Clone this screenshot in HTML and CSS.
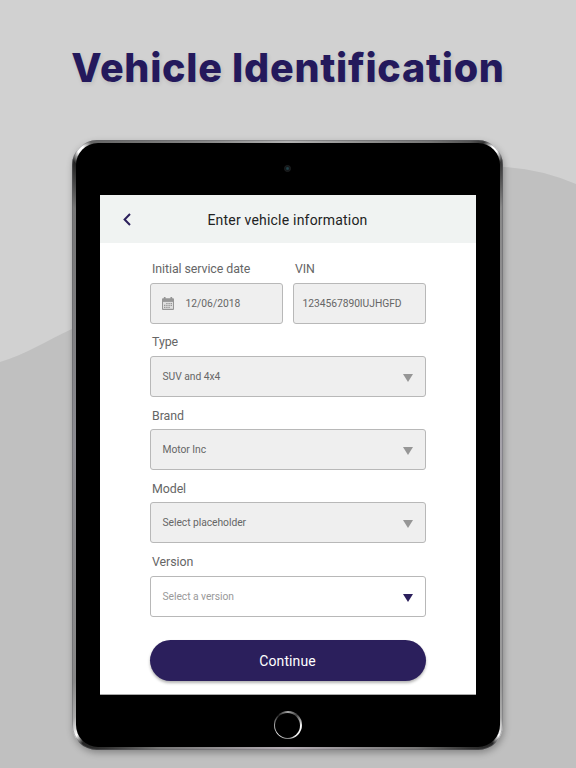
FILE: index.html
```html
<!DOCTYPE html>
<html lang="en">
<head>
  <meta charset="UTF-8">
  <meta name="viewport" content="width=device-width, initial-scale=1.0">
  <title>Vehicle Identification</title>
  <link rel="stylesheet" href="styles.css">
</head>
<body>

  <!-- Background wave -->
  <svg class="wave" viewBox="0 0 576 768" aria-hidden="true">
    <path d="M0 362C24 355 48 340 72 329C210 268 340 160 505 167Q541 169 576 184V768H0Z" fill="#c0c0c0"/>
  </svg>

  <h1 class="title">Vehicle Identification</h1>

  <!-- Tablet -->
  <div class="tablet">
    <div class="bezel">
      <div class="camera"></div>

      <div class="screen">
        <header class="topbar">
          <svg class="back" viewBox="0 0 8 13"><path d="M7 1L1.6 6.5L7 12" fill="none" stroke="#2b1f5c" stroke-width="2"/></svg>
          <h2>Enter vehicle information</h2>
        </header>

        <form class="form">
          <div class="row">
            <div class="field">
              <label>Initial service date</label>
              <div class="input date">
                <svg class="calendar" viewBox="0 0 12 13">
                  <path d="M1 1.2H11Q12 1.2 12 2.2V12Q12 13 11 13H1Q0 13 0 12V2.2Q0 1.2 1 1.2Z" fill="#969696"/>
                  <path d="M1 4.9H11V11.8H1Z" fill="#dedede"/>
                  <path d="M2.7 0V2.4M9.3 0V2.4" stroke="#969696" stroke-width="1.7"/>
                  <path d="M4.2 6.5H10M2 8.4H10M2 10.3H8" stroke="#969696" stroke-width="1.2" stroke-dasharray="1.4 .8"/>
                </svg>
                <span>12/06/2018</span>
              </div>
            </div>
            <div class="field">
              <label>VIN</label>
              <div class="input vin"><span>1234567890IUJHGFD</span></div>
            </div>
          </div>

          <div class="field">
            <label>Type</label>
            <div class="input select"><span>SUV and 4x4</span><i class="arrow"></i></div>
          </div>

          <div class="field">
            <label>Brand</label>
            <div class="input select"><span>Motor Inc</span><i class="arrow"></i></div>
          </div>

          <div class="field">
            <label>Model</label>
            <div class="input select"><span>Select placeholder</span><i class="arrow"></i></div>
          </div>

          <div class="field">
            <label>Version</label>
            <div class="input select active"><span>Select a version</span><i class="arrow"></i></div>
          </div>

          <button type="button" class="continue">Continue</button>
        </form>
      </div>

      <div class="home"><div class="home-inner"></div></div>
    </div>
  </div>

</body>
</html>
```
FILE: styles.css
```css
/* General Styles */
* {
  margin: 0;
  padding: 0;
  box-sizing: border-box;
}

body {
  width: 576px;
  height: 768px;
  overflow: hidden;
  position: relative;
  background-color: #d1d1d1;
  font-family: Roboto, sans-serif;
}

.wave {
  position: absolute;
  top: 0;
  left: 0;
  width: 576px;
  height: 768px;
  z-index: -1;
}

.title {
  height: 140px;
  padding-top: 44px;
  font-family: Inter, sans-serif;
  font-size: 39.5px;
  font-weight: 800;
  line-height: 48px;
  letter-spacing: 0.73px;
  text-align: center;
  white-space: nowrap;
  color: #24195c;
  text-shadow: 1px 2px 4px rgba(0, 0, 0, 0.1);
}

/* Tablet */
.tablet {
  width: 431px;
  height: 610px;
  margin-left: 72px;
  padding: 3px 3.5px;
  border-radius: 25px;
  background: conic-gradient(from 0deg at 50% 50%, #b0b0b0 0deg, #777 25deg, #555 31deg, #333 33deg, #fff 34.5deg, #fff 35.5deg, #333 37deg, #888 42deg, #a5a2aa 90deg, #999 138deg, #aaa 142deg, #fff 144deg, #222 145.5deg, #333 149deg, #777 157deg, #b4adb4 180deg, #777 203deg, #333 211deg, #222 214.5deg, #fff 216deg, #aaa 218deg, #888 222deg, #8c8c92 270deg, #777 318deg, #222 323deg, #fff 324.5deg, #fff 325.5deg, #666 327deg, #888 345deg, #b0b0b0 360deg);
  box-shadow: inset 0 0 0 1px rgba(95, 95, 100, 0.45), 1px 3px 7px rgba(0, 0, 0, 0.3);
}

.bezel {
  height: 604px;
  border-radius: 22px;
  background-color: #000;
  display: flex;
  flex-direction: column;
  align-items: center;
}

.camera {
  width: 7px;
  height: 7px;
  margin-top: 22px;
  border: 1px solid #202123;
  border-radius: 50%;
  background: radial-gradient(#20434b 20%, #101315 60%);
}

.screen {
  width: 376px;
  height: 500px;
  margin-top: 23px;
  background-color: #fff;
  border-bottom: 1px solid #aaa;
}

.topbar {
  height: 48px;
  background-color: #f0f3f2;
  display: grid;
  grid-template-columns: 54px 1fr 54px;
  align-items: center;
}

.back {
  width: 8px;
  height: 13px;
  margin-left: 23px;
  margin-top: 1px;
}

.topbar h2 {
  margin-top: 1px;
  font-size: 14px;
  font-weight: 400;
  letter-spacing: 0.2px;
  text-align: center;
  color: #222;
}

/* Form */
.form {
  width: 276px;
  margin-left: 50px;
  padding-top: 16px;
}

.row {
  display: grid;
  grid-template-columns: 133px 133px;
  gap: 10px;
}

.field {
  height: 73.3px;
}

.field label {
  display: block;
  height: 23.5px;
  padding-left: 2.5px;
  font-size: 12.4px;
  line-height: 19px;
  letter-spacing: -0.08px;
  color: #666;
}

.input {
  height: 41px;
  border: 1px solid #b8b8b8;
  border-radius: 3px;
  background-color: #efefef;
  display: flex;
  align-items: center;
  font-size: 10.3px;
  letter-spacing: -0.05px;
  color: #666;
}

.date {
  padding-left: 11px;
  gap: 12px;
}

.date span {
  letter-spacing: 0;
}

.calendar {
  width: 12px;
  height: 13px;
}

.vin {
  padding-left: 9px;
}

.select {
  justify-content: space-between;
  padding: 0 12px;
}

.arrow {
  margin-top: 3px;
  border: 5px solid transparent;
  border-top: 8px solid #969696;
  border-bottom: 0;
}

.active {
  background-color: #fff;
  color: #999;
}

.active .arrow {
  border-top-color: #2b1f5c;
}

.continue {
  display: block;
  width: 276px;
  height: 41px;
  margin-top: 15px;
  border: 0;
  border-radius: 21px;
  background-color: #2b1f5c;
  box-shadow: 0 2px 3px rgba(0, 0, 0, 0.3);
  font-family: Roboto, sans-serif;
  font-size: 14px;
  letter-spacing: 0.1px;
  color: #fff;
}

/* Home button */
.home {
  width: 28px;
  height: 28px;
  margin-top: 16px;
  padding: 1.5px;
  border-radius: 50%;
  background: conic-gradient(#aaa, #444 40deg, #fff 95deg, #eee 145deg, #888 180deg, #eee 230deg, #999 275deg, #222 315deg, #aaa);
}

.home-inner {
  height: 25px;
  border-radius: 50%;
  background-color: #000;
}
```
